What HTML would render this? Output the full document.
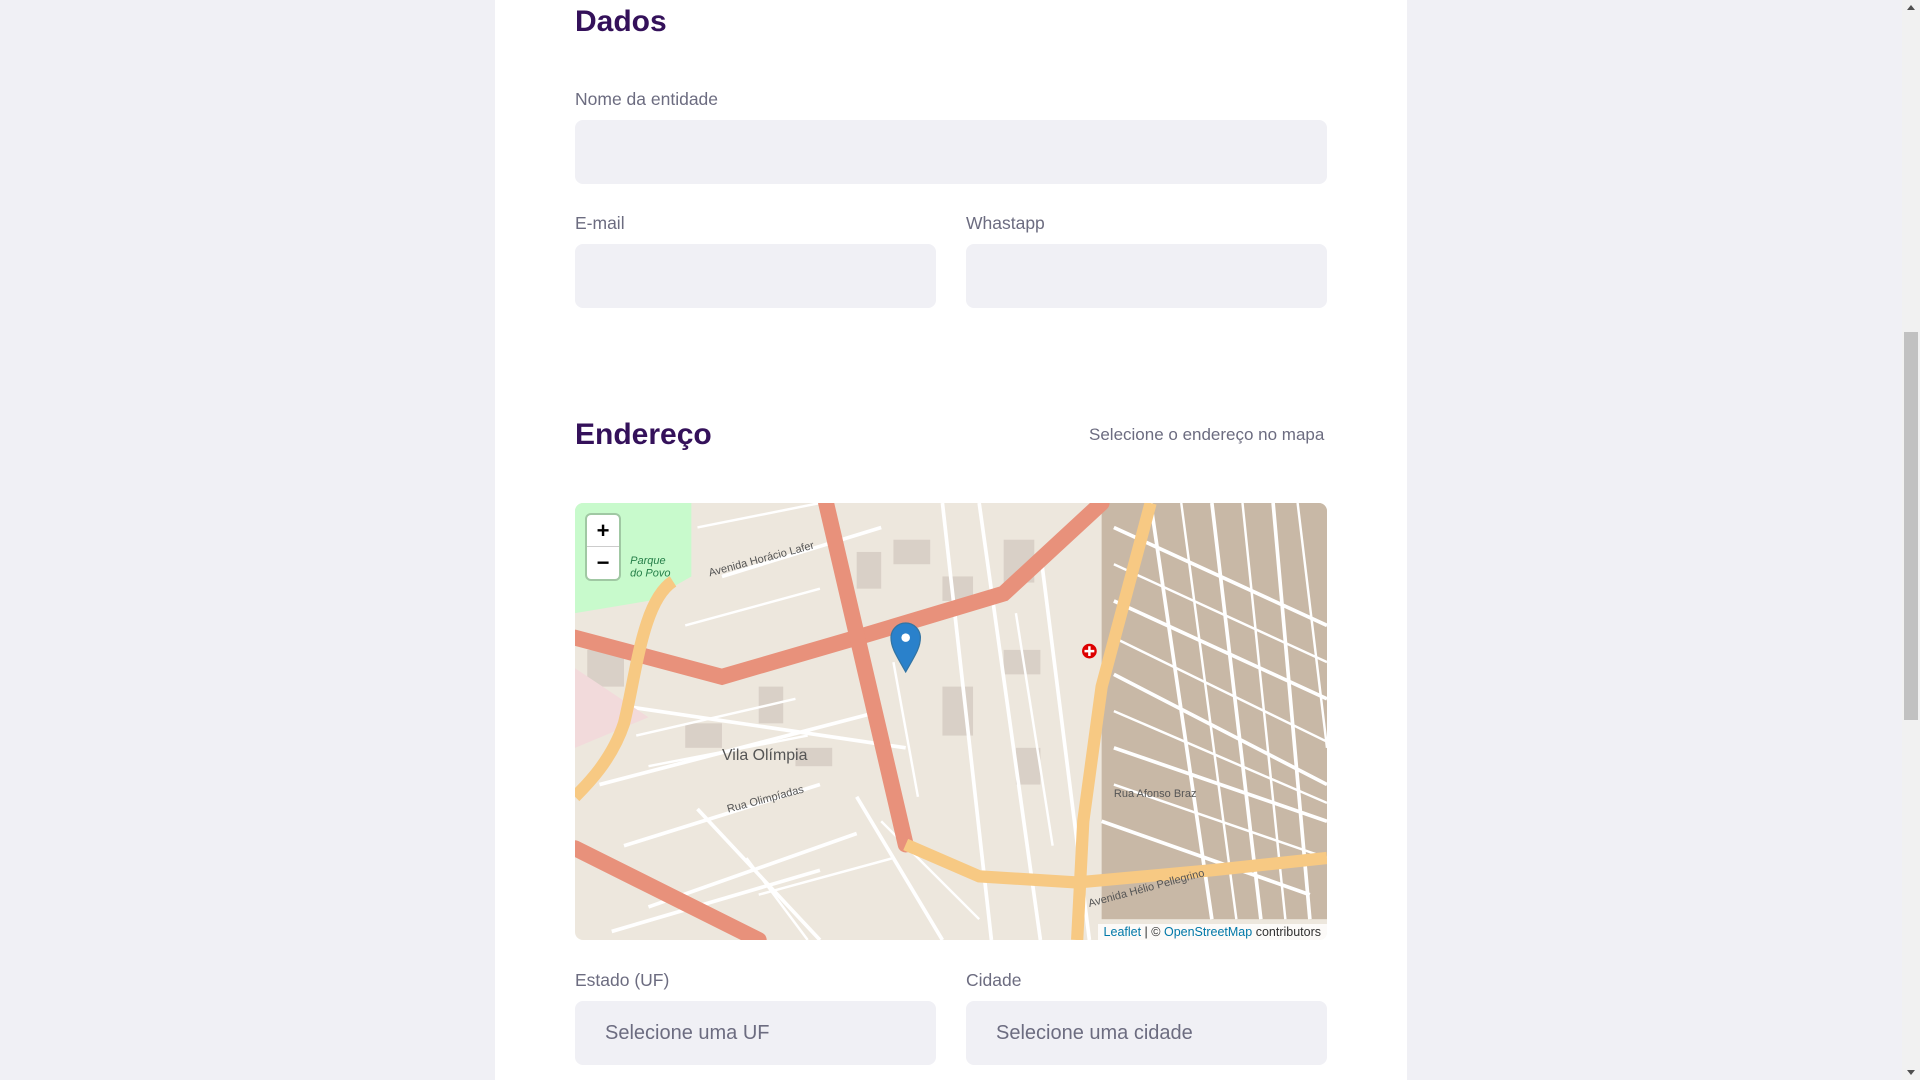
<!DOCTYPE html>
<html><head><meta charset="utf-8"><style>
*{box-sizing:border-box;margin:0;padding:0}
body{width:1920px;height:1080px;overflow:hidden;background:#f0f0f5;font-family:"Liberation Sans",sans-serif;position:relative}
.card{position:absolute;left:495px;top:0;width:912px;height:1080px;background:#fff}
h2{position:absolute;color:#34115a;font-size:30px;font-weight:bold;font-family:"Liberation Sans",sans-serif}
.lbl{position:absolute;color:#6c6c80;font-size:17.5px}
.inp{position:absolute;background:#f0f0f5;border-radius:8px;height:64px;color:#6c6c80;font-size:20px;line-height:64px;padding-left:30px}
.sb{position:absolute;right:0;top:0;width:18px;height:1080px;background:#f1f1f1}
.thumb{position:absolute;right:2px;top:332px;width:14px;height:388px;background:#c1c1c1}
.map{position:absolute;left:575px;top:503px;width:752px;height:437px;border-radius:8px;overflow:hidden}
.zoom{position:absolute;left:12px;top:12px;width:32px;height:64px;background:#fff;border-radius:4px;box-shadow:0 0 0 2px rgba(0,0,0,.2)}
.zoom div{height:32px;text-align:center;font:bold 22px/32px "Liberation Sans";color:#000}
.attr{position:absolute;right:0;bottom:0;background:rgba(255,255,255,.8);font-size:12.5px;padding:1px 6px;color:#333}
.attr span{color:#0078a8}
</style></head><body>
<div class="card"></div>
<h2 style="left:575px;top:5px">Dados</h2>
<div class="lbl" style="left:575px;top:89px">Nome da entidade</div>
<div class="inp" style="left:575px;top:120px;width:752px"></div>
<div class="lbl" style="left:575px;top:213px">E-mail</div>
<div class="inp" style="left:575px;top:244px;width:361px"></div>
<div class="lbl" style="left:966px;top:213px">Whastapp</div>
<div class="inp" style="left:966px;top:244px;width:361px"></div>
<h2 style="left:575px;top:418px">Endereço</h2>
<div class="lbl" style="left:1089px;top:425px;font-size:17px">Selecione o endereço no mapa</div>
<div class="map">
<svg width="752" height="437" viewBox="0 0 614 357" preserveAspectRatio="none">
<rect width="614" height="357" fill="#ede7dd"/>
<rect x="430" y="0" width="184" height="340" fill="#c8b8a6"/>
<g fill="#d9d0c7">
<rect x="230" y="40" width="20" height="30"/><rect x="260" y="30" width="30" height="20"/><rect x="300" y="60" width="25" height="20"/>
<rect x="350" y="30" width="25" height="35"/><rect x="90" y="180" width="30" height="20"/><rect x="150" y="150" width="20" height="30"/>
<rect x="300" y="150" width="25" height="40"/><rect x="360" y="200" width="20" height="30"/><rect x="180" y="200" width="30" height="15"/>
<rect x="10" y="120" width="30" height="30"/><rect x="350" y="120" width="30" height="20"/>
</g>
<g stroke="#fff" stroke-width="3" fill="none">
<path d="M440 20 L614 100 M440 80 L614 160 M440 140 L614 230 M440 200 L614 260 M430 260 L600 320 M470 0 L520 340 M520 0 L560 340 M570 0 L600 340"/>
<path d="M0 160 L270 200 M20 230 L250 170 M40 280 L200 230 M60 330 L230 270 M330 0 L380 357 M300 0 L340 357 M380 40 L420 357 M120 60 L250 20 M30 350 L200 300 M230 240 L300 357 M100 250 L200 357"/>
</g>
<g stroke="#fff" stroke-width="2" fill="none">
<path d="M440 50 L614 130 M440 110 L614 195 M440 170 L614 245 M440 230 L614 290 M495 0 L540 340 M545 0 L580 340 M590 0 L614 200"/>
<path d="M100 20 L200 0 M90 100 L200 70 M240 130 L260 250 M260 130 L280 240 M360 90 L390 280 M250 260 L330 340 M140 290 L190 357 M50 190 L180 160 M60 215 L190 190 M150 320 L260 290"/>
</g>
<path d="M0 0 L95 0 L95 60 L60 80 L0 90 Z" fill="#c8facc"/>
<path d="M0 135 L60 175 L0 200 Z" fill="#f2dadb"/>
<g stroke="#e8917b" stroke-width="13" fill="none" stroke-linecap="round">
<path d="M0 110 L120 142 L230 110 L350 74 L430 0"/>
<path d="M205 0 L270 279"/>
<path d="M0 282 L150 357"/>
</g>
<g stroke="#f7c983" stroke-width="10" fill="none">
<path d="M470 0 L430 150 L415 260 L410 357"/>
<path d="M270 279 L330 305 L410 310 L520 300 L614 290"/>
<path d="M80 64 C55 80 50 140 40 180 C30 210 10 230 0 240"/>
</g>
<g font-family="Liberation Sans" font-size="9" fill="#555">
<text x="120" y="210" font-size="13">Vila Olímpia</text>
<text x="420" y="330" transform="rotate(-15 420 330)">Avenida Hélio Pellegrino</text>
<text x="110" y="60" transform="rotate(-15 110 60)">Avenida Horácio Lafer</text>
<text x="125" y="253" transform="rotate(-15 125 253)">Rua Olimpíadas</text>
<text x="440" y="240">Rua Afonso Braz</text>
<text x="45" y="50" fill="#27804a" font-style="italic">Parque</text>
<text x="45" y="60" fill="#27804a" font-style="italic">do Povo</text>
</g>
<circle cx="420" cy="121" r="6" fill="#d00"/><path d="M420 117v8M416 121h8" stroke="#fff" stroke-width="2"/>
<path d="M270 138 C262 124 258 118 258 110 A12 12 0 0 1 282 110 C282 118 278 124 270 138Z" fill="#2a81cb" stroke="#3274a3"/>
<circle cx="270" cy="110" r="3.5" fill="#fff"/>
</svg>
<div class="zoom"><div style="border-bottom:1px solid #ccc">+</div><div>−</div></div>
<div class="attr"><span>Leaflet</span> | © <span>OpenStreetMap</span> contributors</div>
</div>
<div class="lbl" style="left:575px;top:970px">Estado (UF)</div>
<div class="inp" style="left:575px;top:1001px;width:361px">Selecione uma UF</div>
<div class="lbl" style="left:966px;top:970px">Cidade</div>
<div class="inp" style="left:966px;top:1001px;width:361px">Selecione uma cidade</div>
<div class="sb"><div class="thumb"></div>
<div style="position:absolute;left:5px;top:5px;border:4px solid transparent;border-bottom:5px solid #505050;border-top:0"></div>
<div style="position:absolute;left:5px;bottom:5px;border:4px solid transparent;border-top:5px solid #505050;border-bottom:0"></div>
</div>
</body></html>
